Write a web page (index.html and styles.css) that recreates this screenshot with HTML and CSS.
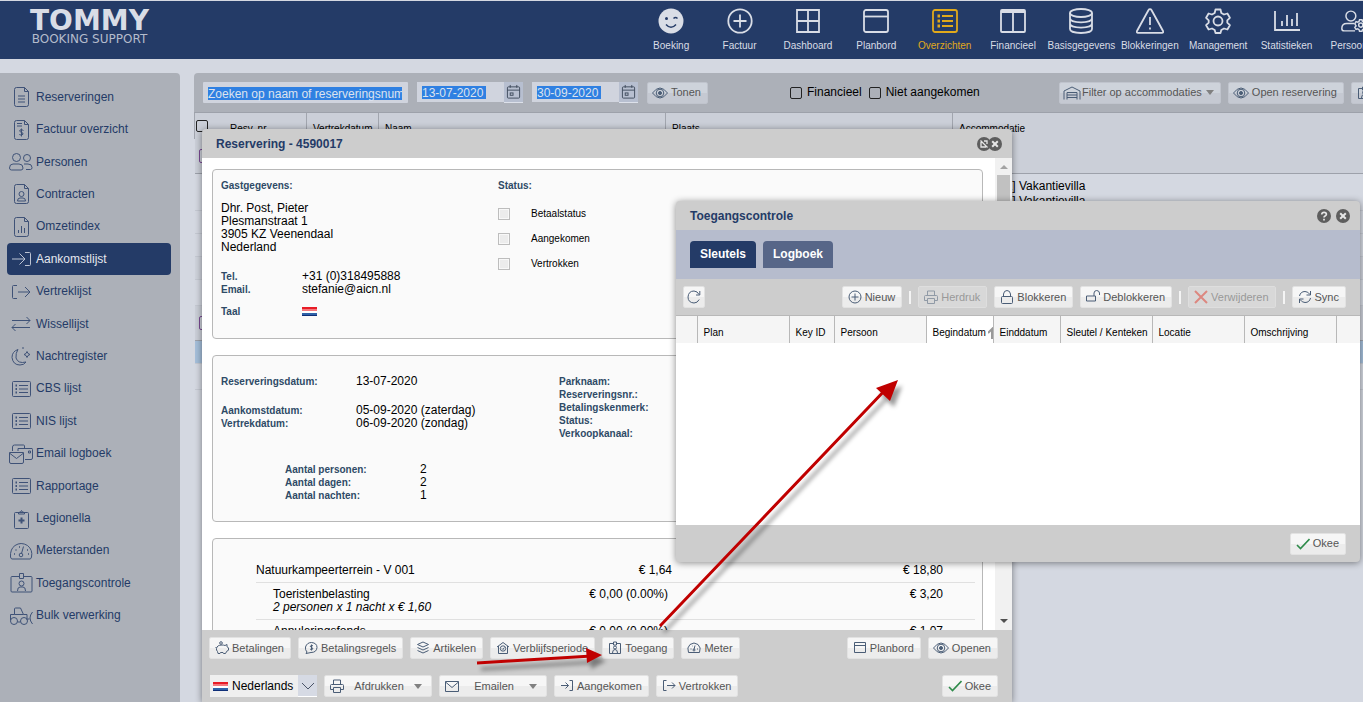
FILE: index.html
```html
<!DOCTYPE html>
<html lang="nl">

<head>
    <meta charset="UTF-8">
    <meta name="viewport" content="width=device-width, initial-scale=1.0">
    <title>Tommy Booking Support</title>
    <link rel="stylesheet" href="styles.css">
</head>

<body>
    <!-- Icons -->
    <svg class="sprite" aria-hidden="true">
        <symbol id="i-smile" viewBox="0 0 26 26"><circle cx="13" cy="13" r="12.5" fill="currentColor" stroke="none"/><path d="M8 16.5q5 5.5 10 0M15.5 10.500q2-2 4 0" stroke="#243b67" stroke-width="1.5"/><circle cx="8.500" cy="10.500" r="1.500" fill="#243b67" stroke="none"/></symbol>
        <symbol id="i-plus" viewBox="0 0 26 26"><circle cx="13" cy="13" r="11.7"/><path d="M13 6.500v13M6.500 13h13"/></symbol>
        <symbol id="i-grid" viewBox="0 0 26 26"><path d="M2 2h22v22H2zM13 2v22M2 13h22"/></symbol>
        <symbol id="i-plan" viewBox="0 0 26 26"><rect x="1" y="2" width="24" height="22" rx="2"/><path d="M1 8.500h24"/></symbol>
        <symbol id="i-list" viewBox="0 0 26 26"><rect x="1" y="2" width="24" height="22" rx="2"/><path d="M10 8h11M10 13h11M10 18h11" stroke-width="2"/><path d="M5.500 8h2.500M5.500 13h2.500M5.500 18h2.500" stroke-width="3"/></symbol>
        <symbol id="i-cols" viewBox="0 0 26 26"><rect x="1" y="2" width="24" height="22" rx="1"/><path d="M1 4h24M13 4v20"/></symbol>
        <symbol id="i-db" viewBox="0 0 26 26"><ellipse cx="13" cy="5" rx="11" ry="4"/><path d="M2 5v16c0 5.300 22 5.300 22 0V5M2 10.300c0 5.300 22 5.300 22 0M2 15.600c0 5.300 22 5.300 22 0"/></symbol>
        <symbol id="i-warn" viewBox="0 0 28 26"><path d="M14 1.200q1 0 1.600 1L27 23q.7 1.800-1 1.800H2Q.3 24.800 1 23L12.400 2.200q.6-1 1.600-1zM14 9v8"/><path d="M14 19.500v2"/></symbol>
        <symbol id="i-gear" viewBox="0 0 26 26"><circle cx="13" cy="13" r="4.500"/><path d="M10.500 1.500h5l.8 3.500 2.700 1.500 3.400-1 2.500 4.300-2.600 2.500v2.400l2.600 2.500-2.500 4.300-3.400-1-2.700 1.500-.8 3h-5l-.8-3L7 20.500l-3.400 1-2.500-4.300 2.600-2.500v-2.400L1.100 9.800l2.500-4.300 3.400 1L9.700 5z" stroke-linejoin="round"/></symbol>
        <symbol id="i-stats" viewBox="0 0 26 26"><path d="M1 3v19h25M8 18v-5M13 18V7M18 18v-7M23 18V5"/></symbol>
        <symbol id="i-usergear" viewBox="0 0 34 26"><circle cx="12" cy="7" r="6"/><path d="M16 16H7q-6 0-6 6 0 3 3 3h13"/><circle cx="24" cy="18" r="2.500"/><path d="M22.500 11.500h3l.6 2 1.600.9 2-.6 1.500 2.600-1.500 1.600 1.500 1.600-1.500 3.600-2-.6-1.600.9-.6 2h-3l-.6-2-1.600-.9-2 .6-1.500-2.600 1.500-1.600-1.500-2.600 1.500-2.600 2 .6 1.600-.9z"/></symbol>

        <symbol id="s-doc" viewBox="0 0 24 20"><path d="M5.500 2.500q0-2 2-2h8l4 4v13q0 2-2 2h-10q-2 0-2-2zM15.500.500v4h4M9 9h7M9 12h7M9 15h7"/></symbol>
        <symbol id="s-invoice" viewBox="0 0 24 20"><path d="M5.500 2.500q0-2 2-2h8l4 4v13q0 2-2 2h-10q-2 0-2-2zM15.500.500v4h4M8 3.500h5M8 6h5M14.500 10.500q-2-1.500-3.500-.500-1 1.500 1 2.200 2.500.5 2 2-1.500 1.800-3.700.3M12.500 8.500v8"/></symbol>
        <symbol id="s-users" viewBox="0 0 24 20"><circle cx="7.500" cy="5.500" r="4"/><circle cx="18" cy="6" r="3.500"/><path d="M4 12h6q4 0 4 4 0 2-2 2H2.500Q.5 18 .5 16q0-4 3.500-4zM15 12h4q4 0 4 3.500 0 2-1.500 2H17"/></symbol>
        <symbol id="s-contract" viewBox="0 0 24 20"><path d="M5.500 2.500q0-2 2-2h8l4 4v13q0 2-2 2h-10q-2 0-2-2zM15.500.500v4h4M8.500 17q0-3 2.500-3h3q2.500 0 2.500 3z"/><circle cx="12.500" cy="10" r="2.500"/></symbol>
        <symbol id="s-chart" viewBox="0 0 24 20"><path d="M5.500 2.500q0-2 2-2h8l4 4v13q0 2-2 2h-10q-2 0-2-2zM15.500.500v4h4M9.500 16v-3M12.500 16V9M15.500 16v-5"/></symbol>
        <symbol id="s-in" viewBox="0 0 24 20"><path d="M3 10h13M10.500 4.500 16 10l-5.500 5.500M16 3.500h4.500q1 0 1 1v11q0 1-1 1H16"/></symbol>
        <symbol id="s-out" viewBox="0 0 24 20"><path d="M8 3.500H4.500q-1 0-1 1v11q0 1 1 1H8M9 10h12M16 5l5 5-5 5"/></symbol>
        <symbol id="s-swap" viewBox="0 0 24 20"><path d="M3 6.500h18M17.500 3l3.500 3.500-3.500 3.500M21 13.500H3M6.500 10 3 13.500 6.500 17"/></symbol>
        <symbol id="s-moon" viewBox="0 0 24 20"><path d="M9 3.500q-6 2-6 8 1 7.500 8 7.500 4 0 6-3-8 2-10-4-.500-5 2-8.500zM18 5.500l1 2 2 1-2 1-1 2-1-2-2-1 2-1zM14 1v2"/></symbol>
        <symbol id="s-list" viewBox="0 0 24 20"><rect x="3.500" y="2.500" width="18" height="15" rx="1"/><path d="M10 6.500h9M10 10h9M10 13.500h9"/><path d="M6.500 6.500h1.500M6.500 10h1.500M6.500 13.500h1.500" stroke-width="2"/></symbol>
        <symbol id="s-mail2" viewBox="0 0 24 20"><path d="M3.500 7V3q0-2 2-2h9q1 0 1 1v2M9 7V4.500h14q.5 0 .5 1V14q0 1.500-1.500 1.500h-6M19.500 7h2v2h-2z"/><path d="M.5 8.500h14V18q0 1.500-1.500 1.500H2Q.5 19.500.5 18zM1 9.500l6.500 5 6.500-5"/></symbol>
        <symbol id="s-clip" viewBox="0 0 24 20"><path d="M5.500 4.500q0-1 1-1h12q1 0 1 1v14q0 1-1 1h-12q-1 0-1-1zM9.500 5V3.500l2-.5q1-3 2 0l2 .5V5z"/><path d="M12.500 8.500v6M9.500 11.500h6" stroke-width="2"/></symbol>
        <symbol id="s-meter" viewBox="0 0 24 20"><path d="M3 18q-1 0-1.500-2-.500-8 4.500-11.500 6-4 12.500 0Q24 9 22.500 16q-.5 2-1.500 2zM12.500 12.500l2-7"/><circle cx="12" cy="14" r="1.800"/><path d="M5 13h1M6.500 9h1M10 6h1M18 9h1M19 13h1" stroke-width="1.500"/></symbol>
        <symbol id="s-badge" viewBox="0 0 24 20"><path d="M10 3.500H3q-1 0-1 1V18q0 1 1 1h19q1 0 1-1V4.500q0-1-1-1h-7M10.500.500h4v5h-4zM8.500 18q0-4 2.500-4h3q2.500 0 2.500 4"/><circle cx="12.500" cy="10.500" r="2.500"/></symbol>
        <symbol id="s-truck" viewBox="0 0 24 20"><circle cx="5" cy="15" r="3.500"/><circle cx="15" cy="15" r="3.500"/><path d="M1.500 14V8.500h4V3q0-1 1-1h5l3 6.500h3.500V14M5.500 8.500h9M8.500 16h3M23.500 6q-5 6 0 12M18.500 13h2"/></symbol>

        <symbol id="b-eye" viewBox="0 0 16 14"><path d="M.5 7q7.500-10 15 0-7.500 10-15 0z"/><circle cx="8" cy="7" r="3.800"/><circle cx="8" cy="7" r="1.500" fill="currentColor"/></symbol>
        <symbol id="b-cal" viewBox="0 0 16 16"><rect x="1.500" y="2.500" width="13" height="12" rx="1"/><path d="M1.500 6h13M4.500.500v3M11.500.500v3"/><rect x="4.500" y="9" width="3" height="2.500"/></symbol>
        <symbol id="b-house" viewBox="0 0 18 14"><path d="M1 13.500V5l8-4 8 4v8.500M4 13.500V6.500h10v7M4 9h10M4 11.500h10"/></symbol>
        <symbol id="b-pig" viewBox="0 0 14 14"><circle cx="6" cy="2" r="1.300"/><path d="M1.500 7.500q.5-3.500 5.500-3.500 2 0 3 .5L12 3.500v2.300l1.500 1v2.400l-1.700 1-1.300 2.300H8.500L8 11.500H5.500l-.5 1H3l-.5-2Q1 9 1.500 7.500zM.5 6l1 1"/></symbol>
        <symbol id="b-coin" viewBox="0 0 14 14"><path d="M3 11Q1 9 1.500 6 3 1.500 7.500 1.500 13 2 13 6.500q-.5 5-6 5l-5 1zM9 4.800q-2.500-1-2.700.4.200 1 1.500 1.300 1.300.5 1 1.500-.8 1-2.700.2M7.500 3.500v6"/></symbol>
        <symbol id="b-stack" viewBox="0 0 14 14"><path d="M7 1l5.500 2.500L7 6 1.500 3.500zM1.500 6.500 7 9l5.500-2.500M1.500 9.500 7 12l5.500-2.500"/></symbol>
        <symbol id="b-home" viewBox="0 0 14 14"><path d="M1 6l6-4.500L13 6M2.500 5v7.500h9V5"/><circle cx="7" cy="7.500" r="2.700"/><path d="M6 7.500l1 1 1.300-2"/></symbol>
        <symbol id="b-badge" viewBox="0 0 14 14"><path d="M5 2.500H1.500v10h11v-10H9M5.500 1h3v3h-3zM4.500 12q0-3.500 2.500-3.500t2.500 3.500"/><circle cx="7" cy="6.500" r="1.500"/></symbol>
        <symbol id="b-meter" viewBox="0 0 14 14"><path d="M1.500 11.500Q-.5 6.500 3 3.500q4-3 8 0 3.500 3 1.500 8zM7 8.500l1-4M3.500 8h1M10 8h1M5 5h.5"/><circle cx="7" cy="9" r="1"/></symbol>
        <symbol id="b-plan" viewBox="0 0 14 14"><path d="M1.500 1.500h11v10h-11zM1.500 4.500h11"/></symbol>
        <symbol id="b-print" viewBox="0 0 14 14"><path d="M3.500 5V1h7v4M3.500 10.500h-3V6.500q0-1 1-1h11q1 0 1 1v4h-3M3.500 8.500h7v5h-7z"/></symbol>
        <symbol id="b-mail" viewBox="0 0 14 14"><path d="M.5 2.500h13v10H.5zM.5 3l6.500 5.500L13.500 3"/></symbol>
        <symbol id="b-in" viewBox="0 0 14 14"><path d="M1 6.500h7.500M5.500 3.500l3 3-3 3M9.500 1.500h3v10h-3"/></symbol>
        <symbol id="b-out" viewBox="0 0 14 14"><path d="M4.500 1.500h-3v10h3M5 6.500h8M10 3.500l3 3-3 3"/></symbol>
        <symbol id="b-check" viewBox="0 0 14 14"><path d="M1 8l3.500 3.500L13.500 2" stroke="#2e8b4a" stroke-width="1.600"/></symbol>
        <symbol id="b-refresh" viewBox="0 0 14 14"><path d="M12.200 9.500Q10.500 13 7 13q-6-.5-6-6 .5-6 6-6 3.500.2 5 3.500M12.800 1v4H9"/></symbol>
        <symbol id="b-plus" viewBox="0 0 14 14"><circle cx="7" cy="7" r="6"/><path d="M7 3.500v7M3.500 7h7"/></symbol>
        <symbol id="b-lock" viewBox="0 0 14 14"><rect x="1.500" y="6.500" width="11" height="7" rx="1"/><path d="M3.500 6.500V4q.5-3.500 3.500-3.500T10.500 4v2.500"/></symbol>
        <symbol id="b-unlock" viewBox="0 0 14 14"><path d="M.5 6h9v5h-9zM8 6V3q.3-2.500 2.700-2.500T13.500 3v2"/></symbol>
        <symbol id="b-cross" viewBox="0 0 14 14"><path d="M1 1l12 12M13 1 1 13" stroke="#e0392b" stroke-width="2"/></symbol>
        <symbol id="b-sync" viewBox="0 0 14 14"><path d="M1.500 6q1-4.500 5.500-4.500 3 0 5 3M12.500 1v4h-4M12.500 8q-1 4.500-5.500 4.500-3 0-5-3M1.500 13V9h4"/></symbol>
        <symbol id="w-close" viewBox="0 0 14 14"><circle cx="7" cy="7" r="7" fill="#5e5e5e" stroke="none"/><path d="M4.200 4.200l5.600 5.600M9.800 4.200 4.200 9.800" stroke="#e6e6e6" stroke-width="2"/></symbol>
        <symbol id="w-pin" viewBox="0 0 14 14"><circle cx="7" cy="7" r="7" fill="#5e5e5e" stroke="none"/><path d="M3.500 3.500l7 7M4 5v5h5M7 4h3v3" stroke="#e6e6e6" stroke-width="1.300"/></symbol>
        <symbol id="w-help" viewBox="0 0 14 14"><circle cx="7" cy="7" r="7" fill="#5e5e5e" stroke="none"/><path d="M4.700 5.500q.2-2.200 2.400-2.200t2.300 1.900q0 1-1.300 1.700-1.100.6-1.100 1.500M7 9.700v1.700" stroke="#e6e6e6" stroke-width="1.700"/></symbol>
        <symbol id="flag-nl" viewBox="0 0 15 9"><path d="M0 0h15v9H0z" fill="#fff" stroke="none"/><path d="M0 0h15v4H0z" fill="#f4777c" stroke="none"/><path d="M0 0h15v2H0z" fill="#e81c26" stroke="none"/><path d="M0 6h15v3H0z" fill="#2f62a8" stroke="none"/><path d="M0 8h15v1H0z" fill="#0f2f78" stroke="none"/></symbol>
    </svg>

    <header class="topbar">
        <a class="logo" href="#">
            <span class="logo-name">TOMMY</span>
            <span class="logo-sub">BOOKING SUPPORT</span>
        </a>
        <nav class="topnav">
            <a href="#"><svg><use href="#i-smile"/></svg>Boeking</a>
            <a href="#"><svg><use href="#i-plus"/></svg>Factuur</a>
            <a href="#"><svg><use href="#i-grid"/></svg>Dashboard</a>
            <a href="#"><svg><use href="#i-plan"/></svg>Planbord</a>
            <a href="#" class="active"><svg><use href="#i-list"/></svg>Overzichten</a>
            <a href="#"><svg><use href="#i-cols"/></svg>Financieel</a>
            <a href="#"><svg><use href="#i-db"/></svg>Basisgegevens</a>
            <a href="#"><svg><use href="#i-warn"/></svg>Blokkeringen</a>
            <a href="#"><svg><use href="#i-gear"/></svg>Management</a>
            <a href="#"><svg><use href="#i-stats"/></svg>Statistieken</a>
            <a href="#"><svg><use href="#i-usergear"/></svg>Persoonlijk</a>
        </nav>
    </header>

    <div class="page">
        <nav class="sidebar">
            <a href="#"><svg><use href="#s-doc"/></svg>Reserveringen</a>
            <a href="#"><svg><use href="#s-invoice"/></svg>Factuur overzicht</a>
            <a href="#"><svg><use href="#s-users"/></svg>Personen</a>
            <a href="#"><svg><use href="#s-contract"/></svg>Contracten</a>
            <a href="#"><svg><use href="#s-chart"/></svg>Omzetindex</a>
            <a href="#" class="active"><svg><use href="#s-in"/></svg>Aankomstlijst</a>
            <a href="#"><svg><use href="#s-out"/></svg>Vertreklijst</a>
            <a href="#"><svg><use href="#s-swap"/></svg>Wissellijst</a>
            <a href="#"><svg><use href="#s-moon"/></svg>Nachtregister</a>
            <a href="#"><svg><use href="#s-list"/></svg>CBS lijst</a>
            <a href="#"><svg><use href="#s-list"/></svg>NIS lijst</a>
            <a href="#"><svg><use href="#s-mail2"/></svg>Email logboek</a>
            <a href="#"><svg><use href="#s-list"/></svg>Rapportage</a>
            <a href="#"><svg><use href="#s-clip"/></svg>Legionella</a>
            <a href="#"><svg><use href="#s-meter"/></svg>Meterstanden</a>
            <a href="#"><svg><use href="#s-badge"/></svg>Toegangscontrole</a>
            <a href="#"><svg><use href="#s-truck"/></svg>Bulk verwerking</a>
        </nav>

        <main class="panel">
            <div class="filterbar">
                <input type="text" class="search" aria-label="Zoeken" placeholder="Zoeken op naam of reserveringsnummer">
                <div class="date-field">
                    <input type="text" aria-label="Datum van" value="13-07-2020">
                    <button type="button" aria-label="Kies datum van"><svg><use href="#b-cal"/></svg></button>
                </div>
                <div class="date-field">
                    <input type="text" aria-label="Datum tot" value="30-09-2020">
                    <button type="button" aria-label="Kies datum tot"><svg><use href="#b-cal"/></svg></button>
                </div>
                <button type="button" class="btn dim eye"><svg><use href="#b-eye"/></svg>Tonen</button>
                <div class="checks">
                    <label><input type="checkbox" class="box">Financieel</label>
                    <label><input type="checkbox" class="box">Niet aangekomen</label>
                </div>
                <div class="filter-right">
                    <button type="button" class="btn dim wide-icon"><svg><use href="#b-house"/></svg>Filter op accommodaties<i class="caret"></i></button>
                    <button type="button" class="btn dim eye"><svg><use href="#b-eye"/></svg>Open reservering</button>
                    <button type="button" class="btn dim"><svg><use href="#b-badge"/></svg>Toegang</button>
                </div>
            </div>

            <table class="list">
                <colgroup><col class="c-nr"><col class="c-date"><col class="c-name"><col class="c-name"><col></colgroup>
                <thead>
                    <tr>
                        <th><input type="checkbox" class="box" aria-label="Alles selecteren">Resv. nr.</th>
                        <th>Vertrekdatum</th>
                        <th>Naam</th>
                        <th>Plaats</th>
                        <th>Accommodatie</th>
                    </tr>
                </thead>
                <tbody>
                    <tr class="group first"><td colspan="5"><span class="expand"></span></td></tr>
                    <tr class="tall"><td></td><td></td><td></td><td></td><td>[Villa A-01] Vakantievilla<br>[Villa A-02] Vakantievilla</td></tr>
                    <tr><td colspan="5"></td></tr>
                    <tr><td colspan="5"></td></tr>
                    <tr class="alt"><td colspan="5"></td></tr>
                    <tr class="last"><td colspan="5"></td></tr>
                    <tr class="group"><td colspan="5"><span class="expand"></span></td></tr>
                    <tr class="selected"><td colspan="5"></td></tr>
                    <tr class="last"><td colspan="5"></td></tr>
                </tbody>
            </table>
        </main>
    </div>

    <!-- Reservation window -->
    <section class="window reservation">
        <div class="window-title">
            <h2>Reservering - 4590017</h2>
            <div class="tools tight">
                <button type="button" aria-label="Losmaken"><svg><use href="#w-pin"/></svg></button>
                <button type="button" aria-label="Sluiten"><svg><use href="#w-close"/></svg></button>
            </div>
        </div>
        <div class="window-body">
            <div class="cards">
                <div class="card guest">
                    <div>
                        <h3>Gastgegevens:</h3>
                        <p class="address">Dhr. Post, Pieter<br>Plesmanstraat 1<br>3905 KZ Veenendaal<br>Nederland</p>
                        <dl class="contact">
                            <dt>Tel.</dt><dd>+31 (0)318495888</dd>
                            <dt>Email.</dt><dd>stefanie@aicn.nl</dd>
                        </dl>
                        <dl class="contact language">
                            <dt>Taal</dt><dd><svg class="flag"><use href="#flag-nl"/></svg></dd>
                        </dl>
                    </div>
                    <div>
                        <h3>Status:</h3>
                        <div class="status">
                            <label><input type="checkbox">Betaalstatus</label>
                            <label><input type="checkbox">Aangekomen</label>
                            <label><input type="checkbox">Vertrokken</label>
                        </div>
                    </div>
                </div>

                <div class="card details">
                    <div>
                        <dl>
                            <dt>Reserveringsdatum:</dt><dd>13-07-2020</dd>
                        </dl>
                        <dl class="stay">
                            <dt>Aankomstdatum:</dt><dd>05-09-2020 (zaterdag)</dd>
                            <dt>Vertrekdatum:</dt><dd>06-09-2020 (zondag)</dd>
                        </dl>
                        <dl class="totals">
                            <dt>Aantal personen:</dt><dd>2</dd>
                            <dt>Aantal dagen:</dt><dd>2</dd>
                            <dt>Aantal nachten:</dt><dd>1</dd>
                        </dl>
                    </div>
                    <dl>
                        <dt>Parknaam:</dt><dd></dd>
                        <dt>Reserveringsnr.:</dt><dd></dd>
                        <dt>Betalingskenmerk:</dt><dd></dd>
                        <dt>Status:</dt><dd></dd>
                        <dt>Verkoopkanaal:</dt><dd></dd>
                    </dl>
                </div>

                <div class="card prices">
                    <table>
                        <tr>
                            <td>Natuurkampeerterrein - V 001</td>
                            <td class="price">€ 1,64</td>
                            <td class="total">€ 18,80</td>
                        </tr>
                        <tr class="sub">
                            <td>Toeristenbelasting<br><em>2 personen x 1 nacht x € 1,60</em></td>
                            <td class="price">€ 0,00 (0.00%)</td>
                            <td class="total">€ 3,20</td>
                        </tr>
                        <tr class="sub">
                            <td>Annuleringsfonds</td>
                            <td class="price">€ 0,00 (0.00%)</td>
                            <td class="total">€ 1,07</td>
                        </tr>
                    </table>
                </div>
            </div>
            <div class="scrollbar">
                <i class="up"></i>
                <span class="thumb"></span>
                <i class="down"></i>
            </div>
        </div>
        <div class="window-footer">
            <div class="button-row">
                <button type="button" class="btn"><svg><use href="#b-pig"/></svg>Betalingen</button>
                <button type="button" class="btn"><svg><use href="#b-coin"/></svg>Betalingsregels</button>
                <button type="button" class="btn"><svg><use href="#b-stack"/></svg>Artikelen</button>
                <button type="button" class="btn"><svg><use href="#b-home"/></svg>Verblijfsperiode</button>
                <button type="button" class="btn"><svg><use href="#b-badge"/></svg>Toegang</button>
                <button type="button" class="btn"><svg><use href="#b-meter"/></svg>Meter</button>
                <button type="button" class="btn push"><svg><use href="#b-plan"/></svg>Planbord</button>
                <button type="button" class="btn eye"><svg><use href="#b-eye"/></svg>Openen</button>
            </div>
            <div class="button-row">
                <div class="language-select">
                    <svg class="flag"><use href="#flag-nl"/></svg>
                    <select aria-label="Taal"><option>Nederlands</option></select>
                    <span class="select-arrow"><svg viewBox="0 0 14 8"><path d="M1 1l6 6 6-6"/></svg></span>
                </div>
                <button type="button" class="btn menu"><svg><use href="#b-print"/></svg>Afdrukken<i class="caret"></i></button>
                <button type="button" class="btn menu"><svg><use href="#b-mail"/></svg>Emailen<i class="caret"></i></button>
                <button type="button" class="btn"><svg><use href="#b-in"/></svg>Aangekomen</button>
                <button type="button" class="btn"><svg><use href="#b-out"/></svg>Vertrokken</button>
                <button type="button" class="btn push"><svg><use href="#b-check"/></svg>Okee</button>
            </div>
        </div>
    </section>

    <!-- Access control window -->
    <section class="window access">
        <div class="window-title">
            <h2>Toegangscontrole</h2>
            <div class="tools">
                <button type="button" aria-label="Help"><svg><use href="#w-help"/></svg></button>
                <button type="button" aria-label="Sluiten"><svg><use href="#w-close"/></svg></button>
            </div>
        </div>
        <div class="tabs">
            <button type="button" class="tab active">Sleutels</button>
            <button type="button" class="tab">Logboek</button>
        </div>
        <div class="toolbar">
            <button type="button" class="btn icon-only" aria-label="Vernieuwen"><svg><use href="#b-refresh"/></svg></button>
            <button type="button" class="btn push"><svg><use href="#b-plus"/></svg>Nieuw</button>
            <span class="sep"></span>
            <button type="button" class="btn" disabled><svg><use href="#b-print"/></svg>Herdruk</button>
            <button type="button" class="btn"><svg><use href="#b-lock"/></svg>Blokkeren</button>
            <button type="button" class="btn"><svg><use href="#b-unlock"/></svg>Deblokkeren</button>
            <span class="sep"></span>
            <button type="button" class="btn" disabled><svg><use href="#b-cross"/></svg>Verwijderen</button>
            <span class="sep"></span>
            <button type="button" class="btn"><svg><use href="#b-sync"/></svg>Sync</button>
        </div>
        <div class="keys">
            <table>
                <colgroup><col class="k-check"><col class="k-wide"><col class="k-id"><col class="k-wide"><col class="k-date"><col class="k-date"><col class="k-wide"><col class="k-wide"><col class="k-wide"><col></colgroup>
                <thead>
                    <tr>
                        <th></th>
                        <th>Plan</th>
                        <th>Key ID</th>
                        <th>Persoon</th>
                        <th class="sorted">Begindatum<svg viewBox="0 0 5 12"><path d="M4 12V2L0 6"/></svg></th>
                        <th>Einddatum</th>
                        <th>Sleutel / Kenteken</th>
                        <th>Locatie</th>
                        <th>Omschrijving</th>
                        <th></th>
                    </tr>
                </thead>
            </table>
        </div>
        <div class="access-footer">
            <button type="button" class="btn"><svg><use href="#b-check"/></svg>Okee</button>
        </div>
    </section>

    <!-- Arrows that point out the steps -->
    <svg class="arrows" viewBox="0 0 440 300" aria-hidden="true">
        <path d="M190 251 417 13M7 288l115-7" stroke="#c00000" stroke-width="3"/>
        <path d="M428 5l-8 21-14-13zM132 280l-15 8-1-15z" fill="#c00000"/>
    </svg>
</body>

</html>
```

FILE: styles.css
```css
* {
    box-sizing: border-box;
}

body {
    margin: 0;
    height: 100vh;
    overflow: hidden;
    position: relative;
    display: flex;
    flex-direction: column;
    background-color: #d4d8e1;
    color: black;
    font-family: "Liberation Sans", Arial, sans-serif;
    font-size: 12px;
    line-height: 13px;
}

a {
    color: inherit;
    text-decoration: none;
}

button, input, select {
    font: inherit;
    color: inherit;
    margin: 0;
    padding: 0;
    border: 0;
}

h2, h3, p, dl, dd {
    margin: 0;
}

svg {
    fill: none;
    stroke: currentColor;
    display: block;
    flex: none;
}

.sprite {
    position: absolute;
    width: 0;
    height: 0;
}

table {
    border-collapse: collapse;
    border-spacing: 0;
}

/* Top bar */
.topbar {
    flex: none;
    height: 59px;
    display: flex;
    background-color: #243b67;
    border-top: 1px solid #d4d8e1;
    color: #d9dde6;
}

.logo {
    padding: 8px 0 0 30px;
    display: flex;
    flex-direction: column;
    align-items: center;
    font-family: "DejaVu Sans", sans-serif;
}

.logo-name {
    font-size: 28px;
    line-height: 24px;
    font-weight: bold;
}

.logo-sub {
    font-size: 12px;
    line-height: 13px;
    color: #b4bccc;
}

.topnav {
    margin-left: auto;
    width: 726px;
    display: flex;
    overflow: hidden;
}

.topnav a {
    flex: 0 0 9.42%;
    display: flex;
    flex-direction: column;
    align-items: center;
    gap: 6px;
    padding-top: 7px;
    font-size: 10px;
    line-height: 12px;
    white-space: nowrap;
}

.topnav svg {
    width: 28px;
    height: 26px;
    stroke-width: 1.8;
}

.topnav .active {
    color: #e0a91b;
}

/* Sidebar */
.page {
    flex: 1;
    min-height: 0;
    display: flex;
    gap: 14px;
    padding-top: 14px;
}

.sidebar {
    flex: none;
    width: 180px;
    padding: 8px 9px 70px 7px;
    background-color: #acb0b8;
    border-top-right-radius: 4px;
    display: grid;
    grid-template-rows: repeat(17, 1fr);
    color: #243b67;
}

.sidebar a {
    display: flex;
    align-items: center;
    gap: 3px;
    padding-left: 2px;
    border-radius: 4px;
}

.sidebar svg {
    width: 24px;
    height: 20px;
    opacity: 0.8;
}

.sidebar .active {
    background-color: #243b67;
    color: #e4e7ee;
}

/* Arrival list */
.panel {
    flex: 1;
    min-width: 0;
    overflow: hidden;
    border-top-left-radius: 4px;
}

.filterbar {
    height: 40px;
    display: flex;
    align-items: center;
    padding-left: 9px;
    background-color: #acb0b8;
    border-bottom: 1px solid #9da1aa;
}

.search {
    width: 205px;
    height: 21px;
    padding: 5px 6px 3px 5px;
    margin-right: 9px;
    background: linear-gradient(#2f80e2, #2f80e2) content-box, #d0d4de;
    color: #dde3ee;
    border-radius: 1px;
}

.search::placeholder {
    color: #dde3ee;
    opacity: 1;
}

.date-field {
    display: flex;
    margin-right: 9px;
}

.date-field input {
    width: 87px;
    height: 20px;
    padding: 4px 5px 3px;
    background: linear-gradient(#2f80e2, #2f80e2) 5px 4px / 64px 13px no-repeat, #d0d4de;
    color: #dde3ee;
}

.date-field button {
    width: 19px;
    height: 21px;
    padding: 2px;
    background-color: #b7bfd0;
    border-bottom: 1px solid #dde1ea;
    color: #3f4b5c;
}

.date-field svg {
    width: 15px;
    height: 16px;
}

.checks {
    display: flex;
    gap: 7px;
    margin-left: 82px;
}

.checks label {
    display: flex;
    align-items: center;
    gap: 5px;
    white-space: nowrap;
}

.box {
    appearance: none;
    width: 12px;
    height: 12px;
    border: 1px solid #222;
    border-radius: 2px;
}

.filter-right {
    margin-left: auto;
    width: 304px;
    overflow: hidden;
    display: flex;
    gap: 7px;
}

.list {
    width: 100%;
    table-layout: fixed;
    line-height: 15px;
}

.c-nr {
    width: 112px;
}

.c-date {
    width: 72px;
}

.c-name {
    width: 287px;
}

.list th {
    height: 26px;
    padding: 8px 0 0 6px;
    text-align: left;
    vertical-align: top;
    font-weight: normal;
    font-size: 10px;
    background-color: #cbcfd8;
    border-left: 1px solid #a1a5ae;
    white-space: nowrap;
}

.list th:first-child {
    padding-left: 1px;
}

.list th .box {
    vertical-align: middle;
    margin: -6px 22px 0 0;
}

.list td {
    height: 23px;
    padding: 0 0 0 6px;
    border-bottom: 1px solid #c5c9d2;
}

.list .group td {
    height: 35px;
    padding-left: 4px;
    background-color: #cbcfd8;
    border-bottom-color: #9da1aa;
}

.list .first td {
    height: 34px;
}

.list .tall td {
    height: 37px;
    padding-top: 5px;
    vertical-align: top;
    white-space: nowrap;
}

.list .alt td {
    background-color: #cfd3dc;
}

.list .last td {
    height: 26px;
}

.list .selected td {
    background-color: #a5bfda;
}

.expand {
    display: block;
    width: 14px;
    height: 14px;
    border: 1px solid #7a4a94;
    border-radius: 2px;
}

/* Buttons */
.btn {
    flex: none;
    height: 22px;
    display: flex;
    align-items: center;
    gap: 3px;
    padding: 0 6px 0 5px;
    border: 1px solid #e2e2e2;
    border-radius: 2px;
    background: linear-gradient(#f6f6f6 50%, #ececec 50%);
    color: #555;
    font-size: 11px;
    white-space: nowrap;
}

.btn svg {
    width: 14px;
    height: 14px;
    color: #4a5d76;
}

.btn:disabled {
    background: #d8d8d8;
    border-color: #dedede;
    color: #999;
}

.btn:disabled svg {
    opacity: 0.5;
}

.btn.dim {
    background: linear-gradient(#ced3db 50%, #c5c9d2 50%);
    border-color: #c0c4cd;
}

.btn.eye {
    padding-left: 4px;
}

.btn.eye svg {
    width: 16px;
}

.btn.wide-icon {
    padding-left: 3px;
    gap: 1px;
}

.btn.wide-icon svg {
    width: 18px;
    height: 16px;
}

.btn.menu {
    width: 108px;
    padding-right: 9px;
    justify-content: space-between;
}

.btn.icon-only {
    padding: 0 3px;
}

.push {
    margin-left: auto;
}

.caret {
    border: 4px solid transparent;
    border-top: 5px solid #808080;
    border-bottom: 0;
}

.wide-icon .caret {
    margin-left: 3px;
}

/* Windows */
.window {
    position: absolute;
    display: flex;
    flex-direction: column;
    background-color: #cdcdcd;
    border-radius: 4px;
    box-shadow: 0 1px 7px rgba(0, 0, 0, 0.45);
}

.window-title {
    flex: none;
    height: 29px;
    display: flex;
    align-items: center;
    justify-content: space-between;
    padding: 0 10px 0 14px;
    color: #243b67;
}

.window-title h2 {
    font-size: 12px;
    line-height: 16px;
}

.tools {
    display: flex;
    gap: 5px;
}

.tools.tight {
    gap: 0;
}

.tools.tight button + button {
    margin-left: -3px;
}

.tools button {
    background: none;
}

.tools svg {
    width: 14px;
    height: 14px;
}

/* Reservation window */
.reservation {
    left: 202px;
    top: 129px;
    bottom: 0;
    width: 810px;
    border-radius: 4px 4px 0 0;
}

.window-body {
    flex: 1;
    min-height: 0;
    display: flex;
    overflow: hidden;
    background-color: white;
}

.cards {
    flex: 1;
    display: flex;
    flex-direction: column;
    gap: 16px;
    padding: 11px 12px 0 10px;
}

.card {
    flex: none;
    display: flex;
    padding: 9px 7px 20px 8px;
    border: 1px solid #b8b8b8;
    border-radius: 4px;
    background-color: #fafafa;
}

.card h3, .card dt {
    font-size: 10px;
    line-height: 13px;
    font-weight: bold;
    color: #2e4a66;
}

.guest > div:first-child {
    width: 277px;
}

.address {
    margin-top: 10px;
}

.card dl {
    display: grid;
    grid-template-columns: 135px 1fr;
    grid-auto-rows: 13px;
}

.card .contact {
    grid-template-columns: 81px 1fr;
    margin-top: 16px;
}

.card .language {
    margin-top: 9px;
}

.flag {
    width: 15px;
    height: 9px;
}

.language .flag {
    margin-top: 2px;
}

.status {
    margin-top: 9px;
    font-size: 10px;
}

.status label {
    display: flex;
    align-items: center;
    gap: 21px;
    height: 25px;
}

.status input {
    appearance: none;
    width: 12px;
    height: 12px;
    border: 1px solid #bdbdbd;
    background-color: #ececec;
    box-shadow: inset 0 0 0 1px #f8f8f8;
}

.card.details {
    padding-top: 19px;
    padding-bottom: 19px;
}

.details > div {
    width: 338px;
}

.card .stay {
    margin-top: 16px;
}

.card .totals {
    margin: 33px 0 0 64px;
}

.card.prices {
    padding: 20px 7px 20px 43px;
}

.prices table {
    width: 100%;
}

.prices td {
    padding: 5px 0;
    vertical-align: top;
    border-bottom: 1px solid #e0e0e0;
}

.prices .price {
    width: 200px;
    text-align: right;
}

.prices .total {
    width: 303px;
    padding-right: 32px;
    text-align: right;
}

.prices .sub td:first-child {
    padding-left: 17px;
}

.prices .sub .price {
    padding-right: 4px;
}

.scrollbar {
    flex: none;
    width: 17px;
    display: flex;
    flex-direction: column;
    align-items: center;
    background-color: #f1f1f1;
}

.scrollbar .up {
    margin: 7px 0 6px;
    border: 4px solid transparent;
    border-top: 0;
    border-bottom: 4px solid #a3a3a3;
}

.scrollbar .down {
    margin: auto 0 7px;
    border: 4px solid transparent;
    border-bottom: 0;
    border-top: 4px solid #505050;
}

.thumb {
    width: 13px;
    height: 140px;
    background-color: #c1c1c1;
}

.window-footer {
    flex: none;
    padding: 7px 14px 5px 7px;
    display: flex;
    flex-direction: column;
    gap: 16px;
}

.button-row {
    display: flex;
    gap: 7px;
}

.language-select {
    height: 22px;
    display: flex;
    align-items: center;
    padding-left: 3px;
    margin-left: 1px;
    background-color: #efefef;
}

.language-select select {
    appearance: none;
    width: 66px;
    margin-left: 4px;
    background: none;
}

.select-arrow {
    align-self: stretch;
    width: 19px;
    display: flex;
    align-items: center;
    justify-content: center;
    background-color: #d6dae4;
    border-bottom: 1px solid white;
    color: #4a5468;
}

.select-arrow svg {
    width: 14px;
    height: 8px;
}

/* Access control window */
.access {
    left: 676px;
    right: 3px;
    top: 201px;
}

.tabs {
    height: 49px;
    display: flex;
    align-items: center;
    gap: 7px;
    padding-left: 14px;
    background-color: #b6bccd;
}

.tab {
    height: 27px;
    padding: 0 10px;
    border-radius: 4px 4px 0 0;
    background-color: #576688;
    color: white;
    font-weight: bold;
}

.tab.active {
    background-color: #243b67;
}

.toolbar {
    height: 37px;
    display: flex;
    align-items: center;
    gap: 7px;
    padding: 0 14px 0 7px;
    border-bottom: 1px solid #b8b8b8;
}

.sep {
    width: 2px;
    height: 13px;
    background-color: #f4f4f4;
}

.keys {
    height: 209px;
    background-color: white;
}

.keys table {
    width: 100%;
    table-layout: fixed;
}

.keys th {
    height: 27px;
    padding: 6px 0 0 6px;
    background-color: #f5f5f5;
    border-left: 1px solid #b8b8b8;
    font-size: 10px;
    font-weight: normal;
    text-align: left;
    white-space: nowrap;
}

.keys th:first-child {
    border-left: 0;
}

.keys .sorted {
    background-color: white;
}

.sorted svg {
    display: inline-block;
    width: 5px;
    height: 12px;
    margin-left: 2px;
    vertical-align: middle;
    color: #999;
    stroke-width: 2;
}

.k-check {
    width: 21px;
}

.k-wide {
    width: 92px;
}

.k-id {
    width: 45px;
}

.k-date {
    width: 67px;
}

.access-footer {
    height: 37px;
    display: flex;
    align-items: center;
    justify-content: flex-end;
    padding-right: 14px;
}

.arrows {
    position: absolute;
    left: 470px;
    top: 375px;
    width: 440px;
    height: 300px;
    stroke: none;
    pointer-events: none;
    filter: drop-shadow(4px 6px 2px rgba(0, 0, 0, 0.4));
}
```
